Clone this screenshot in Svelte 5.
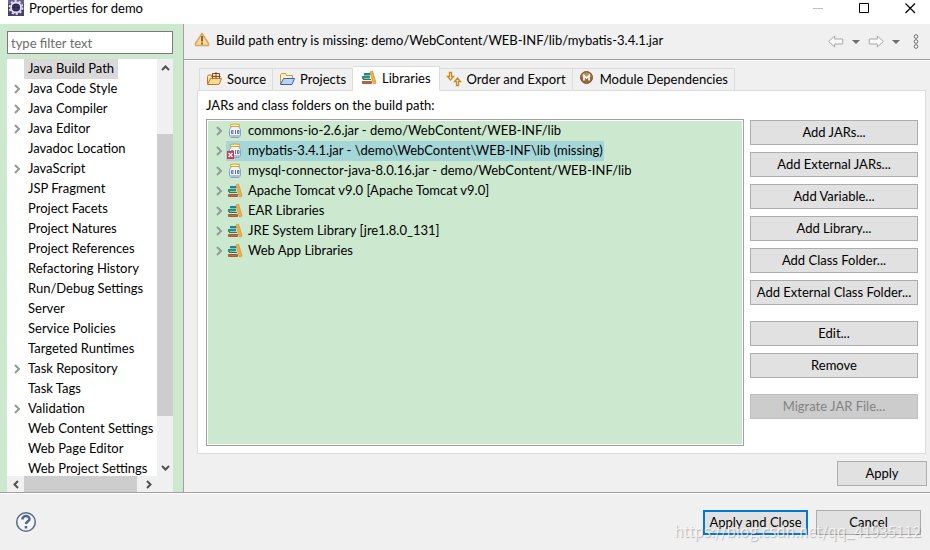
<script>
    let filter = $state("");
    let selectedPage = $state("Java Build Path");
    let selectedTab = $state("Libraries");
    let selectedEntry = $state("mybatis-3.4.1.jar - \\demo\\WebContent\\WEB-INF\\lib (missing)");

    const pages = [
        { name: "Java Build Path" },
        { name: "Java Code Style", children: true },
        { name: "Java Compiler", children: true },
        { name: "Java Editor", children: true },
        { name: "Javadoc Location" },
        { name: "JavaScript", children: true },
        { name: "JSP Fragment" },
        { name: "Project Facets" },
        { name: "Project Natures" },
        { name: "Project References" },
        { name: "Refactoring History" },
        { name: "Run/Debug Settings" },
        { name: "Server" },
        { name: "Service Policies" },
        { name: "Targeted Runtimes" },
        { name: "Task Repository", children: true },
        { name: "Task Tags" },
        { name: "Validation", children: true },
        { name: "Web Content Settings" },
        { name: "Web Page Editor" },
        { name: "Web Project Settings" },
    ];

    const tabs = [
        { name: "Source", icon: "source" },
        { name: "Projects", icon: "projects" },
        { name: "Libraries", icon: "library" },
        { name: "Order and Export", icon: "order" },
        { name: "Module Dependencies", icon: "module" },
    ];

    const entries = [
        { name: "commons-io-2.6.jar - demo/WebContent/WEB-INF/lib", icon: "jar" },
        { name: "mybatis-3.4.1.jar - \\demo\\WebContent\\WEB-INF\\lib (missing)", icon: "missing" },
        { name: "mysql-connector-java-8.0.16.jar - demo/WebContent/WEB-INF/lib", icon: "jar" },
        { name: "Apache Tomcat v9.0 [Apache Tomcat v9.0]", icon: "library" },
        { name: "EAR Libraries", icon: "library" },
        { name: "JRE System Library [jre1.8.0_131]", icon: "library" },
        { name: "Web App Libraries", icon: "library" },
    ];

    const actionGroups = [
        ["Add JARs...", "Add External JARs...", "Add Variable...", "Add Library...", "Add Class Folder...", "Add External Class Folder..."],
        ["Edit...", "Remove"],
        ["Migrate JAR File..."],
    ];
</script>

{#snippet icon(name)}
    <svg width="16" height="16" viewBox="0 0 16 16" aria-hidden="true">
        {#if name === "source"}
            <path d="M1.500 13V5.500l1-1.500h3l1 1.500h2" fill="#fbe3a2" stroke="#b87a2a" />
            <path d="M6.500 2.500h7v7h-7zM10 1v8M5.500 5.500h9" fill="#f1dcc0" stroke="#7a4a2c" />
            <path d="M1.500 13.500l3-6h11l-2.500 6z" fill="#fbd98f" stroke="#b87a2a" stroke-linejoin="round" />
        {:else if name === "projects"}
            <path d="M1.500 13V3.500l1-1h4l1 2h6v3" fill="#fff0bd" stroke="#c09a45" />
            <path d="M1.500 13.500l3-6h11l-2.500 6z" fill="#b7d3f8" stroke="#3c62b4" stroke-linejoin="round" />
        {:else if name === "library"}
            <path d="M3 3h7v2H3z" fill="#1c82aa" />
            <path d="M1 6h8v3H1z" fill="#2c9275" />
            <path d="M3 8h6v1H3zM3 5h6v1H3z" fill="#8fc4b4" />
            <path d="M2 9h8v1H2z" fill="#287a62" />
            <path d="M1.500 11.500h9v2h-9z" fill="#c66b40" stroke="#a85a36" />
            <path d="M9 2l2.500-1L15 13l-2.500 1z" fill="#efb143" stroke="#dea040" />
        {:else if name === "order"}
            <path d="M3.500 1.500h2v4h2l-3 3.500-3-3.500h2z" fill="#fff3c5" stroke="#c18a2c" stroke-width="1.300" />
            <path d="M10.500 14.500h2v-4h2l-3-3.500-3 3.500h2z" fill="#fff3c5" stroke="#c18a2c" stroke-width="1.300" />
        {:else if name === "module"}
            <circle cx="7.500" cy="6.500" r="6" fill="#97683b" stroke="#805229" />
            <path d="M2.500 6a5 4.500 0 0 1 10 0" fill="#b98c61" />
            <path d="M5 9.500v-5l2.500 2.500L10 4.500v5" fill="none" stroke="#fff" stroke-width="1.600" />
        {:else}
            <path d="M4.500 3.500h7l2 3v6l-1.500 2H4l-1.500-2v-6z" fill="#edf3fb" stroke="#8aa3c2" />
            <path d="M3 12h10v1l-1 1H4l-1-1z" fill="#aac2dd" />
            <path d="M3.500 1.500q4.500-1 9 0v2h-9z" fill="#fff1a8" stroke="#d3a83c" />
            <path d="M4.500 7.500h1.500v3h-1.500zM8.500 7v4M10.500 7.500H12v3h-1.500z" fill="none" stroke="#5f7690" />
            {#if name === "missing"}
                <path d="M0 8h7v8H0z" fill="#d9324a" />
                <path d="M1.500 10l4 4M5.500 10l-4 4" stroke="#fff" stroke-width="1.500" />
            {/if}
        {/if}
    </svg>
{/snippet}

{#snippet chevron()}
    <svg class="chevron" width="8" height="10" viewBox="0 0 8 10" aria-hidden="true"><path d="M2 1l4 4-4 4" /></svg>
{/snippet}

<div class="dialog">
    <header class="titlebar">
        <svg width="16" height="18" viewBox="0 0 16 18" aria-hidden="true">
            <path d="M0 0h16v17H0z" fill="#6d5f92" />
            <path d="M0 5h16v12H0z" fill="#4a3c74" />
            <circle cx="8" cy="8.500" r="6.600" fill="none" stroke="#e6e4ea" stroke-width="1.600" stroke-dasharray="2.200 2" />
            <circle cx="8" cy="8.500" r="5" fill="#2c2255" stroke="#e6e4ea" stroke-width="1.800" />
            <path d="M4.500 7h7M4.500 10h7" stroke="#4d4376" />
        </svg>
        <h1>Properties for demo</h1>
        <div class="window-buttons">
            <button aria-label="Minimize"><svg width="11" height="11"><path d="M0 5.500h10" stroke="#c0c0c0" /></svg></button>
            <button aria-label="Maximize"><svg width="11" height="11"><path d="M.5.5h9v9h-9z" fill="none" stroke="#000" /></svg></button>
            <button aria-label="Close"><svg width="11" height="11"><path d="M.5.5l9.500 9.500M10 .5L.5 10" stroke="#000" stroke-width="1.200" /></svg></button>
        </div>
    </header>

    <div class="body">
        <aside>
            <input class="filter" type="text" placeholder="type filter text" aria-label="type filter text" bind:value={filter}>
            <div class="pages">
                <ul>
                    {#each pages.filter((p) => p.name.toLowerCase().includes(filter.toLowerCase())) as page}
                        <li>
                            <span class="twisty">{#if page.children}{@render chevron()}{/if}</span>
                            <button class:selected={page.name === selectedPage} onclick={() => (selectedPage = page.name)}>{page.name}</button>
                        </li>
                    {/each}
                </ul>
                <div class="scroll vertical">
                    <button aria-label="Scroll up"><svg width="9" height="6"><path d="M1 5l3.500-3.500L8 5" /></svg></button>
                    <div class="track"><div class="thumb"></div></div>
                    <button aria-label="Scroll down"><svg width="9" height="6"><path d="M1 1l3.500 3.500L8 1" /></svg></button>
                </div>
                <div class="scroll horizontal">
                    <button aria-label="Scroll left"><svg width="6" height="9"><path d="M5 1L1.500 4.500 5 8" /></svg></button>
                    <div class="track"><div class="thumb"></div></div>
                    <button aria-label="Scroll right"><svg width="6" height="9"><path d="M1 1l3.500 3.500L1 8" /></svg></button>
                </div>
            </div>
        </aside>

        <main>
            <div class="message">
                <svg width="16" height="16" viewBox="0 0 16 16" aria-hidden="true">
                    <path d="M8 1.500L14.500 11.500v2h-13v-2z" fill="#fbdc96" stroke="#dda45a" stroke-linejoin="round" stroke-width="1.500" />
                    <path d="M8 4v5.500M8 10.500v2" stroke="#6b4a2a" stroke-width="1.600" />
                </svg>
                <span>Build path entry is missing: demo/WebContent/WEB-INF/lib/mybatis-3.4.1.jar</span>
                <div class="history">
                    <button aria-label="Back"><svg width="16" height="13"><path d="M.7 6.500l6-5.500v3h8v5h-8v3z" fill="#f8f8f8" stroke="#a8a8a8" /></svg></button>
                    <button aria-label="Back history"><svg width="8" height="4"><path d="M0 0h8L4 4z" fill="#6c6c70" /></svg></button>
                    <button aria-label="Forward"><svg width="16" height="13"><path d="M15.300 6.500l-6-5.500v3h-8v5h8v3z" fill="#f8f8f8" stroke="#a8a8a8" /></svg></button>
                    <button aria-label="Forward history"><svg width="8" height="4"><path d="M0 0h8L4 4z" fill="#6c6c70" /></svg></button>
                    <button class="menu" aria-label="View menu">
                        <svg width="6" height="15" fill="#fff" stroke="#666"><circle cx="3" cy="2.500" r="1.800" /><circle cx="3" cy="7.500" r="1.800" /><circle cx="3" cy="12.500" r="1.800" /></svg>
                    </button>
                </div>
            </div>

            <div class="content">
                <div class="tabs" role="tablist">
                    {#each tabs as tab}
                        <button role="tab" aria-selected={tab.name === selectedTab} class:active={tab.name === selectedTab} onclick={() => (selectedTab = tab.name)}>
                            {@render icon(tab.icon)}<span>{tab.name}</span>
                        </button>
                    {/each}
                </div>
                <section class="panel">
                    <p id="entries-label">JARs and class folders on the build path:</p>
                    <div class="columns">
                        <ul class="entries" aria-labelledby="entries-label">
                            {#each entries as entry}
                                <li>
                                    {@render chevron()}
                                    <button class:selected={entry.name === selectedEntry} onclick={() => (selectedEntry = entry.name)}>
                                        {@render icon(entry.icon)}<span>{entry.name}</span>
                                    </button>
                                </li>
                            {/each}
                        </ul>
                        <div class="actions">
                            {#each actionGroups as group}
                                <div class="group">
                                    {#each group as action}
                                        <button class="push" disabled={action.startsWith("Migrate")}>{action}</button>
                                    {/each}
                                </div>
                            {/each}
                        </div>
                    </div>
                </section>
                <button class="push apply">Apply</button>
            </div>
        </main>
    </div>

    <footer>
        <button class="help" aria-label="Help">
            <svg width="22" height="22" viewBox="0 0 22 22">
                <circle cx="11" cy="11" r="9.300" fill="#f4f5f7" stroke="#596a8b" stroke-width="1.500" />
                <path d="M7.500 8.500V8a3.500 3 0 0 1 7 0c0 2.500-3.500 2.300-3.500 5M11 15v2.500" fill="none" stroke="#526488" stroke-width="2.500" />
            </svg>
        </button>
        <button class="push default">Apply and Close</button>
        <button class="push">Cancel</button>
        <span class="watermark">https://blog.csdn.net/qq_41935112</span>
    </footer>
</div>

<style>
    :global(body) {
        margin: 0;
    }

    .dialog {
        display: flex;
        flex-direction: column;
        height: 100vh;
        background: #f0f0f0;
        color: #000;
        font: 13px/18px Lato, "Open Sans", sans-serif;
        overflow: hidden;
    }

    .dialog * {
        box-sizing: border-box;
    }

    svg {
        display: block;
        flex: none;
    }

    button {
        margin: 0;
        padding: 0;
        border: none;
        background: none;
        color: inherit;
        font: inherit;
        white-space: nowrap;
    }

    ul {
        margin: 0;
        padding: 0;
        list-style: none;
    }

    .titlebar {
        display: flex;
        align-items: center;
        flex: none;
        height: 24px;
        padding: 0 14px 8px 8px;
        background: #fff;
    }

    h1 {
        margin: 0 0 0 5px;
        font-size: 13px;
        line-height: 16px;
        font-weight: normal;
    }

    .window-buttons {
        display: flex;
        gap: 35px;
        margin-left: auto;
    }

    .body {
        display: flex;
        flex: 1;
        min-height: 0;
        border-bottom: 1px solid #a0a0a0;
    }

    aside {
        display: flex;
        flex-direction: column;
        flex: none;
        width: 184px;
        padding: 7px 10px 0 7px;
        border-right: 1px solid #a0a0a0;
        background: #cce8cf;
    }

    .filter {
        flex: none;
        width: 100%;
        height: 23px;
        margin-bottom: 5px;
        padding: 0 3px;
        border: 1px solid #7a7a7a;
        border-radius: 0;
        background: #fff;
        font: inherit;
    }

    .filter::placeholder {
        color: #6d6d6d;
    }

    .pages {
        display: grid;
        grid-template-columns: 1fr 16px;
        grid-template-rows: minmax(0, 1fr) 16px;
        flex: 1;
        min-height: 0;
        background: #f0f0f0;
    }

    .pages ul {
        overflow: hidden;
        background: #fff;
    }

    .pages li {
        display: flex;
        height: 20px;
    }

    .twisty {
        display: flex;
        align-items: center;
        flex: none;
        width: 17px;
        padding-left: 6px;
    }

    .pages li button {
        padding: 0 4px 2px;
    }

    .pages .selected {
        background: #d9d9d9;
    }

    .chevron path {
        fill: none;
        stroke: #929a94;
        stroke-width: 2;
    }

    .scroll {
        display: flex;
    }

    .scroll button {
        display: grid;
        place-items: center;
        flex: 0 0 17px;
    }

    .scroll path {
        fill: none;
        stroke: #505050;
        stroke-width: 2;
    }

    .track {
        display: flex;
        flex: 1;
    }

    .thumb {
        background: #cdcdcd;
    }

    .vertical,
    .vertical .track {
        flex-direction: column;
    }

    .vertical .track {
        justify-content: flex-end;
        padding-bottom: 43px;
    }

    .vertical .thumb {
        height: 83%;
    }

    .horizontal .thumb {
        width: 97%;
    }

    main {
        display: flex;
        flex-direction: column;
        flex: 1;
        min-width: 0;
    }

    .message {
        display: flex;
        align-items: center;
        flex: none;
        gap: 6px;
        height: 36px;
        padding: 0 11px 4px 10px;
        border-bottom: 1px solid #a0a0a0;
        box-shadow: 0 1px #fff;
    }

    .history {
        display: flex;
        align-items: center;
        gap: 8px;
        margin-left: auto;
        padding-top: 4px;
    }

    .history .menu {
        margin-left: 5px;
    }

    .content {
        display: flex;
        flex-direction: column;
        flex: 1;
        min-height: 0;
        padding: 6px 3px 6px 13px;
    }

    /* the active tab has to cover the top edge of the panel */
    .tabs {
        display: flex;
        align-items: flex-end;
        flex: none;
        z-index: 1;
        height: 25px;
        padding-left: 2px;
    }

    .tabs button {
        display: flex;
        align-items: center;
        gap: 5px;
        height: 23px;
        padding: 0 6px 2px;
        border: 1px solid #dcdcdc;
        border-left-width: 0;
    }

    .tabs button:first-child {
        border-left-width: 1px;
    }

    .tabs .active {
        height: 25px;
        padding: 0 8px 2px;
        border-bottom-color: #fff;
        background: #fff;
    }

    .panel {
        display: flex;
        flex-direction: column;
        flex: 1;
        min-height: 0;
        margin: -1px 1px 7px 0;
        padding: 5px 7px 7px 8px;
        border: 1px solid #dcdcdc;
        background: #fff;
    }

    p {
        margin: 0 0 5px;
    }

    .columns {
        display: flex;
        flex: 1;
        gap: 6px;
        min-height: 0;
    }

    .entries {
        flex: 1;
        min-width: 0;
        padding: 1px;
        border: 1px solid #a0a0a6;
        background: #cce8cf content-box;
        overflow: hidden;
    }

    .entries li {
        display: flex;
        align-items: center;
        gap: 3px;
        height: 20px;
        padding-left: 7px;
    }

    .entries li button {
        display: flex;
        align-items: center;
        gap: 5px;
        height: 20px;
        padding: 0 1px;
    }

    .entries span {
        padding-bottom: 2px;
    }

    .entries .selected {
        background: #a5d6d8;
    }

    .actions {
        display: flex;
        flex-direction: column;
        flex: none;
        gap: 16px;
        width: 168px;
        padding-top: 1px;
    }

    .group {
        display: flex;
        flex-direction: column;
        gap: 7px;
    }

    .push {
        flex: none;
        height: 25px;
        padding-bottom: 2px;
        border: 1px solid #adadad;
        background: #e1e1e1;
    }

    .push:disabled {
        border-color: #bfbfbf;
        background: #ccc;
        color: #838383;
    }

    .apply {
        align-self: flex-end;
        width: 90px;
    }

    footer {
        position: relative;
        display: flex;
        align-items: center;
        flex: none;
        gap: 8px;
        height: 57px;
        padding: 0 9px 0 15px;
        border-top: 1px solid #fff;
    }

    .help {
        margin-right: auto;
    }

    footer .push {
        width: 105px;
        padding-bottom: 0;
    }

    footer .default {
        border: 2px solid #0078d7;
    }

    .watermark {
        position: absolute;
        right: 9px;
        bottom: 10px;
        color: rgba(255, 255, 255, 0.7);
        font-family: "Noto Sans CJK SC", "Noto Sans", sans-serif;
        font-size: 15px;
        text-shadow: 1px 1px 1px rgba(0, 0, 0, 0.25);
        pointer-events: none;
    }
</style>
